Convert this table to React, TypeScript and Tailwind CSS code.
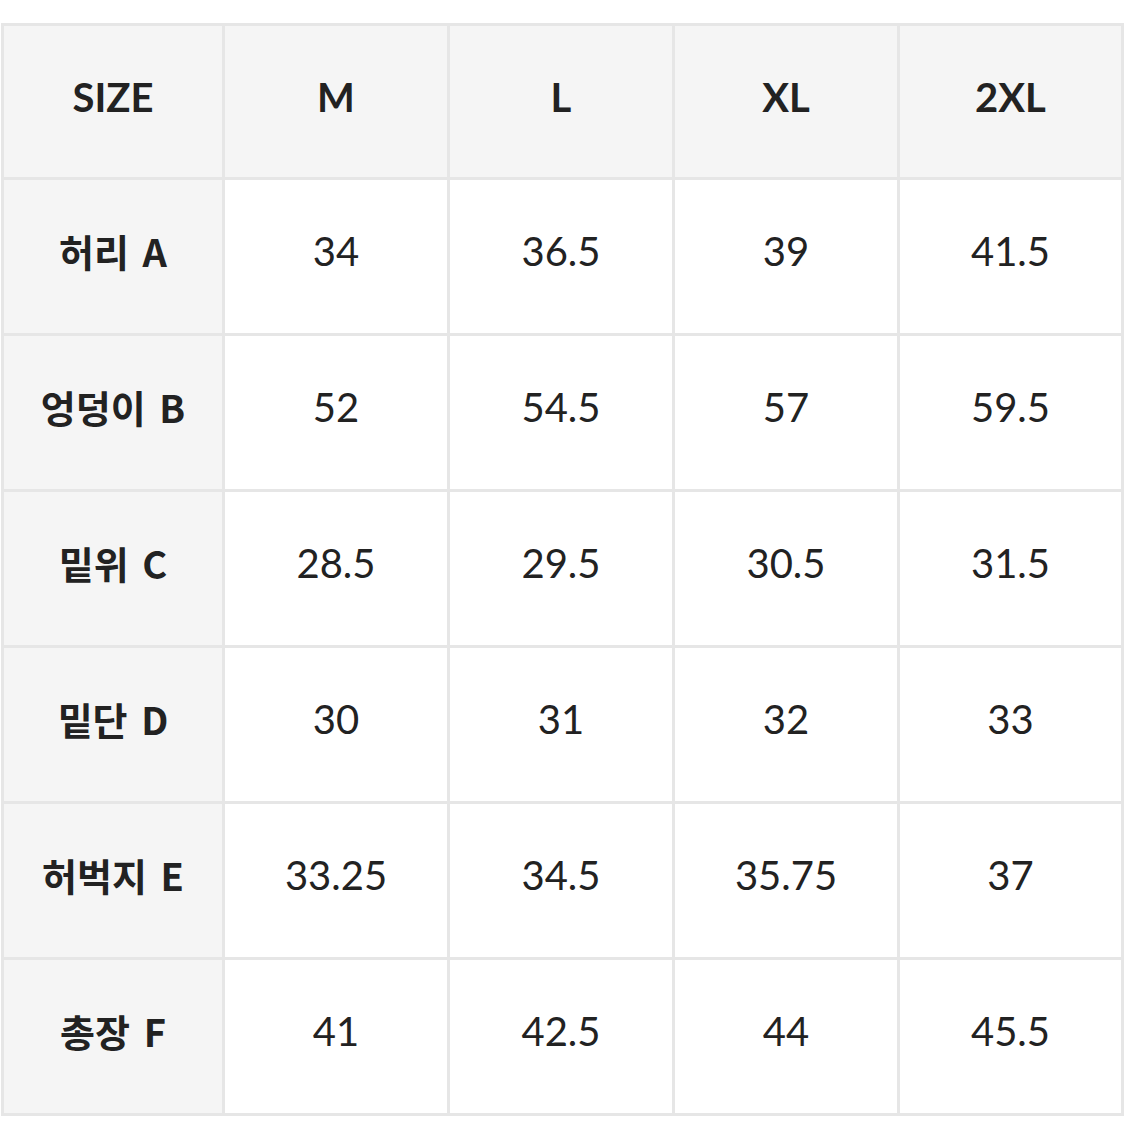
const header = ['SIZE', 'M', 'L', 'XL', '2XL']

const rows: [string, string[]][] = [
  ['허리 A', ['34', '36.5', '39', '41.5']],
  ['엉덩이 B', ['52', '54.5', '57', '59.5']],
  ['밑위 C', ['28.5', '29.5', '30.5', '31.5']],
  ['밑단 D', ['30', '31', '32', '33']],
  ['허벅지 E', ['33.25', '34.5', '35.75', '37']],
  ['총장 F', ['41', '42.5', '44', '45.5']],
]

export default function App() {
  return (
    <div className="min-h-[1142px] bg-white pt-[23px] pl-[1px] font-['Lato','Noto_Sans_CJK_KR',sans-serif] text-[#222]">
      <div className="grid w-[1123px] grid-cols-[218px_222px_222px_222px_221px] grid-rows-[151px_repeat(6,153px)] gap-[3px] bg-[#e6e6e6] p-[3px]">
        {header.map((h) => (
          <div key={h} className="flex items-center justify-center bg-[#f5f5f5] pb-[9px] text-[40px] font-bold">
            {h}
          </div>
        ))}
        {rows.map(([label, values]) => (
          <>
            <div key={label} className="flex items-center justify-center bg-[#f5f5f5] pb-[12px] font-['Noto_Sans_CJK_KR',sans-serif] text-[38px] font-bold [word-spacing:5px]">
              {label}
            </div>
            {values.map((v, i) => (
              <div key={label + i} className="flex items-center justify-center bg-white pb-[12px] text-[40px]">
                {v}
              </div>
            ))}
          </>
        ))}
      </div>
    </div>
  )
}
